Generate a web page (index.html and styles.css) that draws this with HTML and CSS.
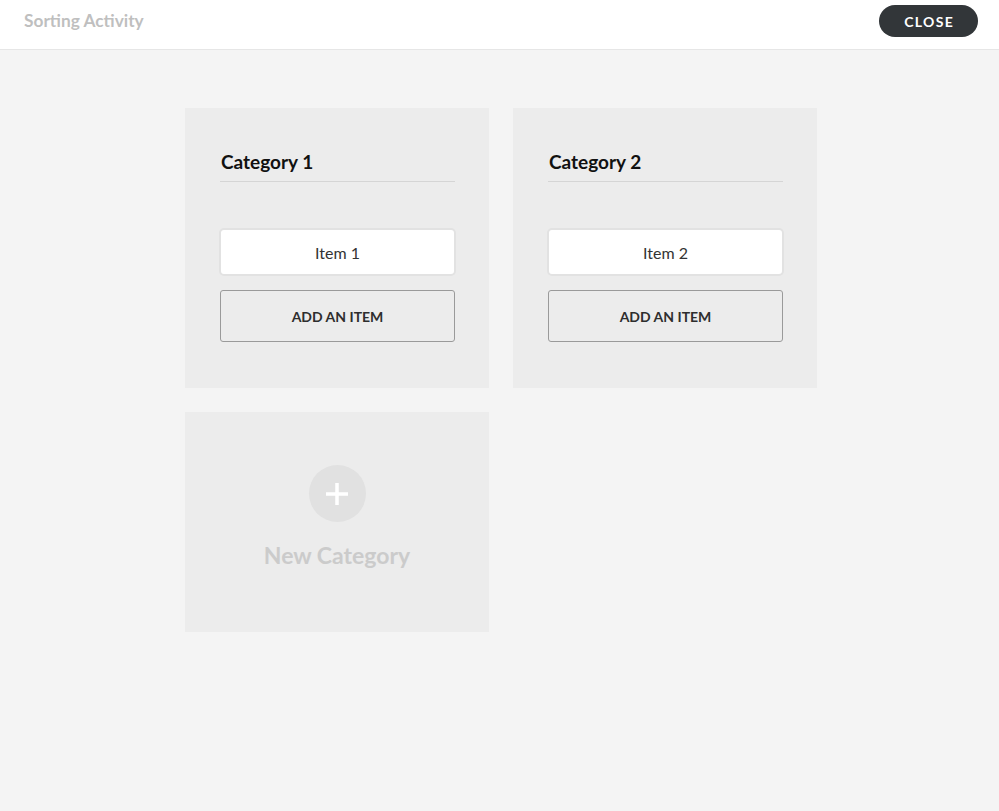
FILE: index.html
```html
<!DOCTYPE html>
<html lang="en">
<head>
    <meta charset="UTF-8" />
    <title>Sorting Activity</title>
    <link rel="stylesheet" href="styles.css">
</head>
<body>
    <!-- top bar -->
    <header class="top-bar">
        <div class="top-title">Sorting Activity</div>
        <button class="close-btn">CLOSE</button>
    </header>

    <div class="board">
        <div class="category">
            <h2 class="category-title">Category 1</h2>
            <div class="item">Item 1</div>
            <button class="add-btn">ADD AN ITEM</button>
        </div>
        <div class="category">
            <h2 class="category-title">Category 2</h2>
            <div class="item">Item 2</div>
            <button class="add-btn">ADD AN ITEM</button>
        </div>

        <!-- empty slot for adding a category -->
        <div class="category new-category">
            <div class="plus-circle">
                <svg width="22" height="22" viewBox="0 0 22 22">
                    <path d="M11 0 V22 M0 11 H22" stroke="#fff" stroke-width="3.5" fill="none" />
                </svg>
            </div>
            <div class="new-label">New Category</div>
        </div>
    </div>
</body>
</html>
```

FILE: styles.css
```css
body {
    margin: 0;
    font-family: Lato, "Open Sans", Arial, sans-serif;
    background: #f4f4f4;
    min-height: 811px;
}
.top-bar {
    display: flex;
    align-items: center;
    justify-content: space-between;
    background: #fff;
    padding: 5px 21px 12px 24px;
    border-bottom: 1px solid #e6e6e6;
}
.top-title {
    font-size: 17.3px;
    font-weight: bold;
    color: #bfbfbf;
    line-height: 20px;
}
.close-btn {
    height: 32px;
    padding: 0 24px 0 25px;
    border: none;
    border-radius: 16px;
    background: #323639;
    color: #fff;
    font-family: inherit;
    font-size: 14px;
    font-weight: bold;
    letter-spacing: 1.3px;
    cursor: pointer;
}
.board {
    display: flex;
    flex-wrap: wrap;
    gap: 24px;
    width: 632px;
    padding: 58px 0 0 185px;
}
.category {
    width: 304px;
    box-sizing: border-box;
    background: #ececec;
    padding: 42px 34px 46px 35px;
}
.category-title {
    margin: 0;
    font-size: 19px;
    line-height: 24px;
    font-weight: bold;
    color: #111;
    padding: 0 0 7px 1px;
    border-bottom: 1px solid #d5d5d5;
}
.item {
    margin: 46px -1px 0;
    height: 48px;
    box-sizing: border-box;
    background: #fff;
    border: 2px solid #e2e2e2;
    border-radius: 5px;
    display: flex;
    align-items: center;
    justify-content: center;
    font-size: 16px;
    color: #333;
}
.add-btn {
    display: block;
    width: 100%;
    height: 52px;
    margin-top: 14px;
    background: transparent;
    border: 1px solid #9a9a9a;
    border-radius: 3px;
    font-family: inherit;
    font-size: 14px;
    font-weight: bold;
    color: #2e2e2e;
    cursor: pointer;
}
.new-category {
    height: 220px;
    padding: 53px 0 0;
    display: flex;
    flex-direction: column;
    align-items: center;
}
.plus-circle {
    width: 57px;
    height: 57px;
    border-radius: 50%;
    background: #e1e1e1;
    display: flex;
    align-items: center;
    justify-content: center;
}
.new-label {
    margin-top: 19px;
    font-size: 23px;
    line-height: 28px;
    font-weight: bold;
    color: #cbcbcb;
}
```
